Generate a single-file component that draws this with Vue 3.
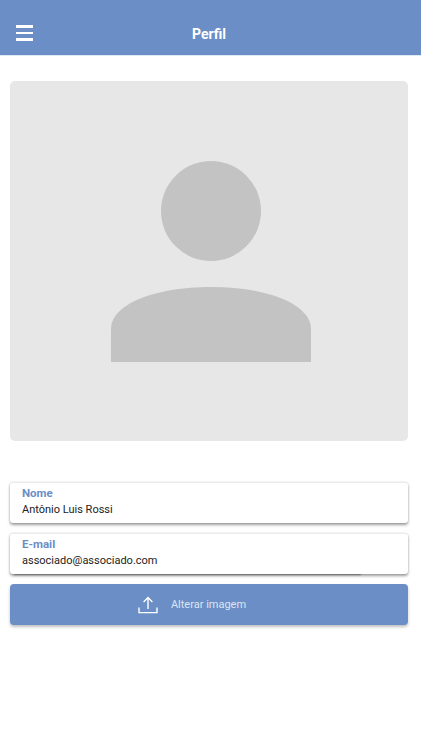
<template>
  <div class="page">
    <header class="top-bar">
      <button class="menu-btn" aria-label="Menu">
        <span></span>
        <span></span>
        <span></span>
      </button>
      <h1 class="title">Perfil</h1>
    </header>

    <main class="content">
      <div class="photo">
        <svg width="200" height="201" viewBox="0 0 200 201">
          <circle cx="100" cy="50" r="50" fill="#c3c3c3" />
          <path
            d="M0 201V168C0 143 44 126 100 126C156 126 200 143 200 168V201Z"
            fill="#c3c3c3"
          />
        </svg>
      </div>

      <div class="fields">
        <div v-for="field in fields" :key="field.label" class="field" :class="field.cls">
          <span class="field-label">{{ field.label }}</span>
          <span class="field-value">{{ field.value }}</span>
        </div>

        <button class="upload-btn">
          <svg width="20" height="18" viewBox="0 0 20 18" fill="none" stroke="#fff" stroke-width="1.4">
            <path d="M1 11.5V16.6H19V11.5" />
            <path d="M10 13V1.8M5.6 6L10 1.6L14.4 6" />
          </svg>
          <span>Alterar imagem</span>
        </button>
      </div>
    </main>
  </div>
</template>

<script setup>
const fields = [
  { label: "Nome", value: "Antônio Luis Rossi" },
  { label: "E-mail", value: "associado@associado.com", cls: "field-email" },
];
</script>

<style>
html,
body {
  margin: 0;
  background: #fff;
}
</style>

<style scoped>
.page {
  width: 422px;
  height: 750px;
  overflow: hidden;
  font-family: Roboto, "Liberation Sans", sans-serif;
  background: #fff;
}

.top-bar {
  position: relative;
  box-sizing: border-box;
  width: 421px;
  height: 56px;
  padding: 25px 0 0 16px;
  background: #6b8ec6;
  border-bottom: 1px solid #dfe8f5;
}

.menu-btn {
  display: flex;
  flex-direction: column;
  gap: 4px;
  width: 17px;
  padding: 0;
  border: 0;
  background: none;
}

.menu-btn span {
  display: block;
  height: 2.5px;
  background: #fff;
}

.title {
  position: absolute;
  left: 0;
  right: 3px;
  top: 26px;
  margin: 0;
  text-align: center;
  color: #fff;
  font-size: 14px;
  line-height: 16px;
  font-weight: 700;
}

.content {
  width: 398px;
  margin-left: 10px;
  padding-top: 25px;
}

.photo {
  display: flex;
  justify-content: center;
  box-sizing: border-box;
  height: 360px;
  padding: 80px 0 0 4px;
  background: #e7e7e7;
  border-radius: 5px;
}

.fields {
  isolation: isolate;
  display: flex;
  flex-direction: column;
  gap: 10px;
  margin-top: 41px;
}

.field {
  position: relative;
  display: flex;
  flex-direction: column;
  box-sizing: border-box;
  height: 41px;
  padding: 3px 12px 0;
  background: #fff;
  border-top: 1px solid #ececec;
  border-radius: 3px;
  box-shadow: 0 2px 3px rgba(0, 0, 0, 0.38), 0 0 2px rgba(0, 0, 0, 0.12);
}

.field-email::after {
  content: "";
  position: absolute;
  left: 4px;
  width: 347px;
  bottom: 0;
  height: 2px;
  box-shadow: 0 1px 2px rgba(0, 0, 0, 0.4);
  z-index: -1;
}

.field-label {
  color: #6b8ec6;
  font-size: 11.5px;
  line-height: 14px;
  font-weight: 700;
}

.field-value {
  margin-top: 2px;
  color: #222;
  font-size: 11px;
  line-height: 15px;
}

.upload-btn {
  display: flex;
  align-items: center;
  justify-content: center;
  gap: 13px;
  height: 41px;
  padding: 0 34px 0 0;
  border: 0;
  border-radius: 4px;
  background: #6b8ec6;
  box-shadow: 0 2px 3px rgba(0, 0, 0, 0.25);
  color: #dbe5f3;
  font-family: inherit;
  font-size: 11px;
}
</style>
